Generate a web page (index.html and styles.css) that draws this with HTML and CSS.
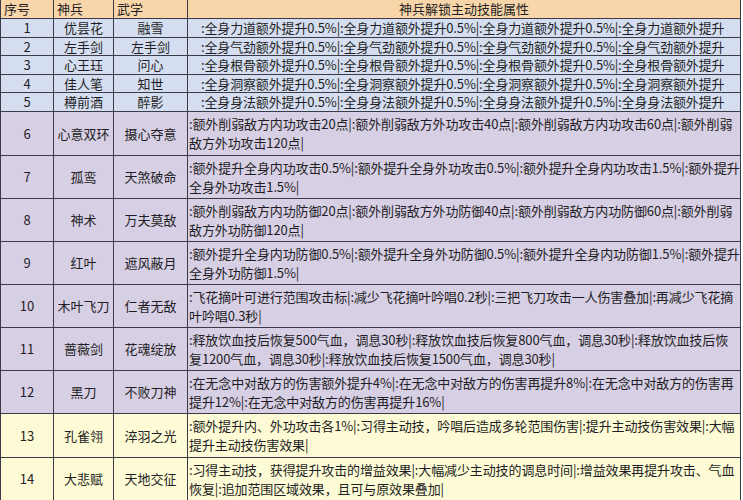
FILE: index.html
```html
<!DOCTYPE html>
<html lang="zh">
<head>
<meta charset="utf-8">
<title>神兵解锁主动技能属性</title>
<link rel="stylesheet" href="styles.css">
</head>
<body>
<table class="sheet">
  <colgroup>
    <col class="w-no"><col class="w-name"><col class="w-skill"><col class="w-attr">
  </colgroup>
  <thead>
    <tr class="hdr">
      <th class="l">序号</th>
      <th class="l">神兵</th>
      <th class="l">武学</th>
      <th class="mid">神兵解锁主动技能属性</th>
    </tr>
  </thead>
  <tbody>
    <tr class="blue h19"><td class="c">1</td><td class="c">优昙花</td><td class="c">融雪</td><td class="one">:全身力道额外提升0.5%|:全身力道额外提升0.5%|:全身力道额外提升0.5%|:全身力道额外提升</td></tr>
    <tr class="blue h18"><td class="c">2</td><td class="c">左手剑</td><td class="c">左手剑</td><td class="one">:全身气劲额外提升0.5%|:全身气劲额外提升0.5%|:全身气劲额外提升0.5%|:全身气劲额外提升</td></tr>
    <tr class="blue h19"><td class="c">3</td><td class="c">心王珏</td><td class="c">问心</td><td class="one">:全身根骨额外提升0.5%|:全身根骨额外提升0.5%|:全身根骨额外提升0.5%|:全身根骨额外提升</td></tr>
    <tr class="blue h18"><td class="c">4</td><td class="c">佳人笔</td><td class="c">知世</td><td class="one">:全身洞察额外提升0.5%|:全身洞察额外提升0.5%|:全身洞察额外提升0.5%|:全身洞察额外提升</td></tr>
    <tr class="blue h19"><td class="c">5</td><td class="c">樽前酒</td><td class="c">醉影</td><td class="one">:全身身法额外提升0.5%|:全身身法额外提升0.5%|:全身身法额外提升0.5%|:全身身法额外提升</td></tr>
    <tr class="lav h44"><td class="c">6</td><td class="c">心意双环</td><td class="c">摄心夺意</td><td class="two">:额外削弱敌方内功攻击20点|:额外削弱敌方外功攻击40点|:额外削弱敌方内功攻击60点|:额外削弱<br>敌方外功攻击120点|</td></tr>
    <tr class="lav h43"><td class="c">7</td><td class="c">孤鸾</td><td class="c">天煞破命</td><td class="two">:额外提升全身内功攻击0.5%|:额外提升全身外功攻击0.5%|:额外提升全身内功攻击1.5%|:额外提升<br>全身外功攻击1.5%|</td></tr>
    <tr class="lav h43"><td class="c">8</td><td class="c">神术</td><td class="c">万夫莫敌</td><td class="two">:额外削弱敌方内功防御20点|:额外削弱敌方外功防御40点|:额外削弱敌方内功防御60点|:额外削弱<br>敌方外功防御120点|</td></tr>
    <tr class="lav h43"><td class="c">9</td><td class="c">红叶</td><td class="c">遮风蔽月</td><td class="two">:额外提升全身内功防御0.5%|:额外提升全身外功防御0.5%|:额外提升全身内功防御1.5%|:额外提升<br>全身外功防御1.5%|</td></tr>
    <tr class="lav h43"><td class="c">10</td><td class="c">木叶飞刀</td><td class="c">仁者无敌</td><td class="two">:飞花摘叶可进行范围攻击标|:减少飞花摘叶吟唱0.2秒|:三把飞刀攻击一人伤害叠加|:再减少飞花摘<br>叶吟唱0.3秒|</td></tr>
    <tr class="lav h43"><td class="c">11</td><td class="c">蔷薇剑</td><td class="c">花魂绽放</td><td class="two">:释放饮血技后恢复500气血，调息30秒|:释放饮血技后恢复800气血，调息30秒|:释放饮血技后恢<br>复1200气血，调息30秒|:释放饮血技后恢复1500气血，调息30秒|</td></tr>
    <tr class="lav h43"><td class="c">12</td><td class="c">黑刀</td><td class="c">不败刀神</td><td class="two">:在无念中对敌方的伤害额外提升4%|:在无念中对敌方的伤害再提升8%|:在无念中对敌方的伤害再<br>提升12%|:在无念中对敌方的伤害再提升16%|</td></tr>
    <tr class="yel h44"><td class="c">13</td><td class="c">孔雀翎</td><td class="c">淬羽之光</td><td class="two">:额外提升内、外功攻击各1%|:习得主动技，吟唱后造成多轮范围伤害|:提升主动技伤害效果|:大幅<br>提升主动技伤害效果|</td></tr>
    <tr class="yel h43"><td class="c">14</td><td class="c">大悲赋</td><td class="c">天地交征</td><td class="two">:习得主动技，获得提升攻击的增益效果|:大幅减少主动技的调息时间|:增益效果再提升攻击、气血<br>恢复|:追加范围区域效果，且可与原效果叠加|</td></tr>
  </tbody>
</table>
</body>
</html>
```

FILE: styles.css
```css
html, body {
  margin: 0;
  padding: 0;
  background: #ffffff;
}

.sheet {
  border-collapse: collapse;
  table-layout: fixed;
  width: 740px;
  font-family: "Noto Sans CJK SC", "Noto Sans", sans-serif;
  font-size: 13px;
  color: #1e1e24;
}

.w-no { width: 53px; }
.w-name { width: 60px; }
.w-skill { width: 74px; }
.w-attr { width: 553px; }

.sheet th,
.sheet td {
  border: 1px solid #3b3b48;
  padding: 0;
  overflow: hidden;
  white-space: nowrap;
  vertical-align: middle;
  font-weight: normal;
  line-height: 17px;
}

.sheet thead th {
  border-top: none;
}

.hdr {
  height: 18px;
  background: #f8d6a9;
}

.hdr th.l {
  text-align: left;
  padding-left: 3px;
}

.hdr th.mid {
  text-align: center;
}

.blue { background: #d5def0; }
.lav { background: #d7cfe4; }
.yel { background: #fdfbd5; }

.h18 { height: 18px; }
.h19 { height: 19px; }
.h43 { height: 43px; }
.h44 { height: 44px; }

.sheet td.c {
  text-align: center;
}

.sheet td.one {
  text-align: left;
  padding-left: 13px;
  letter-spacing: -0.15px;
}

.sheet td.two {
  text-align: left;
  padding-left: 1px;
  line-height: 19px;
  letter-spacing: -0.12px;
}
```
